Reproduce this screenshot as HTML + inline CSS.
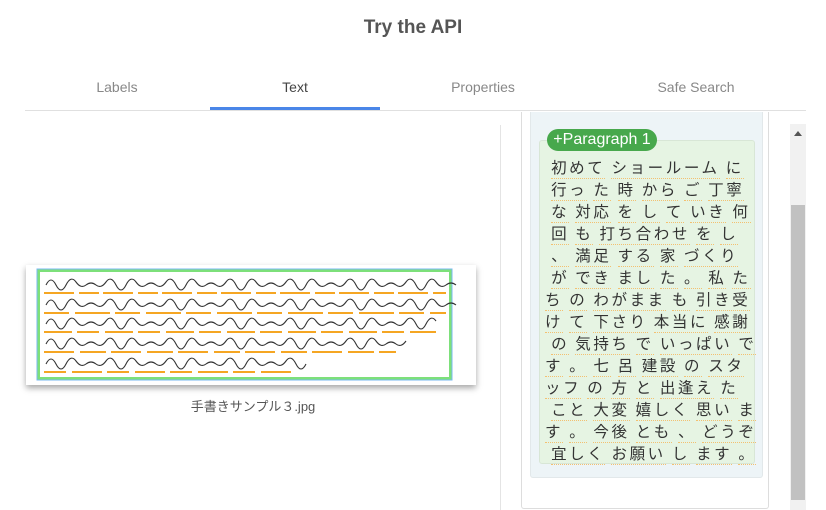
<!DOCTYPE html>
<html><head><meta charset="utf-8">
<style>
*{box-sizing:border-box;margin:0;padding:0}
body{width:826px;height:510px;overflow:hidden;background:#fff;font-family:"Liberation Sans","Noto Sans CJK JP",sans-serif;position:relative;color:#444}
.title{position:absolute;top:17px;left:0;width:826px;text-align:center;font-size:19px;font-weight:bold;color:#555}
.tab{position:absolute;top:79px;font-size:14px;color:#888;text-align:center;width:170px}
.ul{position:absolute;left:210px;top:107px;width:170px;height:3px;background:#4a86e8}
.div{position:absolute;left:25px;top:110px;width:781px;height:1px;background:#e0e0e0}
.vl{position:absolute;left:500px;top:125px;width:1px;height:385px;background:#e4e4e4}
.card{position:absolute;left:521px;top:112px;width:248px;height:397px;border:1px solid #ddd;border-top:none;border-radius:0 0 3px 3px}
.inner{position:absolute;left:530px;top:112px;width:233px;height:366px;background:#edf4f7;border:1px solid #e2e8ea;border-top:none;border-radius:0 0 3px 3px}
.para{position:absolute;left:539px;top:140px;width:216px;height:324px;background:#e6f4e3;border:1px solid #d8e6d6;border-radius:3px}
.badge{position:absolute;left:547px;top:129px;width:110px;height:22px;background:#47a84c;color:#fff;border-radius:11px;font-size:16px;line-height:22px;text-align:center}
.lines{position:absolute;left:545px;top:156px;width:215px;font-family:"Noto Sans CJK JP",sans-serif;font-size:15.5px;letter-spacing:2.6px;color:#333;line-height:22px;white-space:pre}
.lines span{border-bottom:1px dotted #f3c070}
.sb{position:absolute;left:790px;top:124px;width:16px;height:386px;background:#f1f1f1}
.thumb{position:absolute;left:791px;top:205px;width:14px;height:295px;background:#c1c1c1}
.arr{position:absolute;left:794px;top:131px;width:0;height:0;border-left:4px solid transparent;border-right:4px solid transparent;border-bottom:5px solid #555}
.img{position:absolute;left:26px;top:265px;width:450px;height:120px;background:#fff;box-shadow:0 3px 6px rgba(0,0,0,.35)}
.cap{position:absolute;left:0;width:506px;top:396px;text-align:center;font-size:13px;color:#555}
</style></head><body>
<div class="title">Try the API</div>
<div class="tab" style="left:32px">Labels</div>
<div class="tab" style="left:210px;color:#444">Text</div>
<div class="tab" style="left:398px">Properties</div>
<div class="tab" style="left:611px">Safe Search</div>
<div class="ul"></div><div class="div"></div>
<div class="vl"></div>
<div class="img">
<svg width="450" height="120" viewBox="0 0 450 120">
<rect x="12.5" y="5.5" width="412" height="108" fill="#fff" stroke="#7de07a" stroke-width="3"/>
<rect x="11" y="4" width="415" height="111" fill="none" stroke="#7ab8f0" stroke-width="1"/>
<g stroke="#f5a623" stroke-width="2">
<line x1="18" y1="28" x2="420" y2="28" stroke-dasharray="30 5 20 4"/>
<line x1="18" y1="48" x2="420" y2="48" stroke-dasharray="25 6 35 5"/>
<line x1="18" y1="67" x2="410" y2="67" stroke-dasharray="28 5 22 6"/>
<line x1="18" y1="87" x2="370" y2="87" stroke-dasharray="30 6 26 5"/>
<line x1="18" y1="107" x2="270" y2="107" stroke-dasharray="22 6 30 5"/>
</g>
<g stroke="#333" stroke-width="1.1" fill="none">
<path d="M20 20 q5 -10 10 0 t10 0 t10 -3 t10 3 t10 0 t10 -3 t10 3 t10 0 t10 -3 t10 3 t10 0 t10 -3 t10 3 t10 0 t10 -3 t10 3 t10 0 t10 -3 t10 3 t10 0 t10 -3 t10 3 t10 0 t10 -3 t10 3 t10 0 t10 -3 t10 3 t10 0 t10 -3 t10 3 t10 0 t10 -3 t10 3 t10 0 t10 -3 t10 3 t10 0 t10 -3 t10 3 t10 0"/>
<path d="M20 40 q5 -10 10 0 t10 0 t10 -3 t10 3 t10 0 t10 -3 t10 3 t10 0 t10 -3 t10 3 t10 0 t10 -3 t10 3 t10 0 t10 -3 t10 3 t10 0 t10 -3 t10 3 t10 0 t10 -3 t10 3 t10 0 t10 -3 t10 3 t10 0 t10 -3 t10 3 t10 0 t10 -3 t10 3 t10 0 t10 -3 t10 3 t10 0 t10 -3 t10 3 t10 0 t10 -3 t10 3 t10 0"/>
<path d="M20 59 q5 -10 10 0 t10 0 t10 -3 t10 3 t10 0 t10 -3 t10 3 t10 0 t10 -3 t10 3 t10 0 t10 -3 t10 3 t10 0 t10 -3 t10 3 t10 0 t10 -3 t10 3 t10 0 t10 -3 t10 3 t10 0 t10 -3 t10 3 t10 0 t10 -3 t10 3 t10 0 t10 -3 t10 3 t10 0 t10 -3 t10 3 t10 0 t10 -3 t10 3 t10 0 t10 -3"/>
<path d="M20 79 q5 -10 10 0 t10 0 t10 -3 t10 3 t10 0 t10 -3 t10 3 t10 0 t10 -3 t10 3 t10 0 t10 -3 t10 3 t10 0 t10 -3 t10 3 t10 0 t10 -3 t10 3 t10 0 t10 -3 t10 3 t10 0 t10 -3 t10 3 t10 0 t10 -3 t10 3 t10 0 t10 -3 t10 3 t10 0 t10 -3 t10 3 t10 0 t10 -3"/>
<path d="M20 99 q5 -10 10 0 t10 0 t10 -3 t10 3 t10 0 t10 -3 t10 3 t10 0 t10 -3 t10 3 t10 0 t10 -3 t10 3 t10 0 t10 -3 t10 3 t10 0 t10 -3 t10 3 t10 0 t10 -3 t10 3 t10 0 t10 -3 t10 3 t10 0"/>
</g>
</svg>
</div>
<div class="cap">手書きサンプル３.jpg</div>
<div class="card"></div>
<div class="inner"></div>
<div class="para"></div>
<div class="badge">+Paragraph 1</div>
<div class="lines"> <span>初めて</span> <span>ショールーム</span> <span>に</span>
 <span>行っ</span> <span>た</span> <span>時</span> <span>から</span> <span>ご</span> <span>丁寧</span>
 <span>な</span> <span>対応</span> <span>を</span> <span>し</span> <span>て</span> <span>いき</span> <span>何</span>
 <span>回</span> <span>も</span> <span>打ち合わせ</span> <span>を</span> <span>し</span>
 <span>、</span> <span>満足</span> <span>する</span> <span>家</span> <span>づくり</span>
 <span>が</span> <span>でき</span> <span>まし</span> <span>た</span> <span>。</span> <span>私</span> <span>た</span>
<span>ち</span> <span>の</span> <span>わがまま</span> <span>も</span> <span>引き受</span>
<span>け</span> <span>て</span> <span>下さり</span> <span>本当に</span> <span>感謝</span>
 <span>の</span> <span>気持ち</span> <span>で</span> <span>いっぱい</span> <span>で</span>
<span>す</span> <span>。</span> <span>七</span> <span>呂</span> <span>建設</span> <span>の</span> <span>スタ</span>
<span>ッフ</span> <span>の</span> <span>方</span> <span>と</span> <span>出逢え</span> <span>た</span>
 <span>こと</span> <span>大変</span> <span>嬉しく</span> <span>思い</span> <span>ま</span>
<span>す</span> <span>。</span> <span>今後</span> <span>とも</span> <span>、</span> <span>どうぞ</span>
 <span>宜しく</span> <span>お願い</span> <span>し</span> <span>ます</span> <span>。</span></div>
<div class="sb"></div><div class="thumb"></div><div class="arr"></div>
</body></html>
